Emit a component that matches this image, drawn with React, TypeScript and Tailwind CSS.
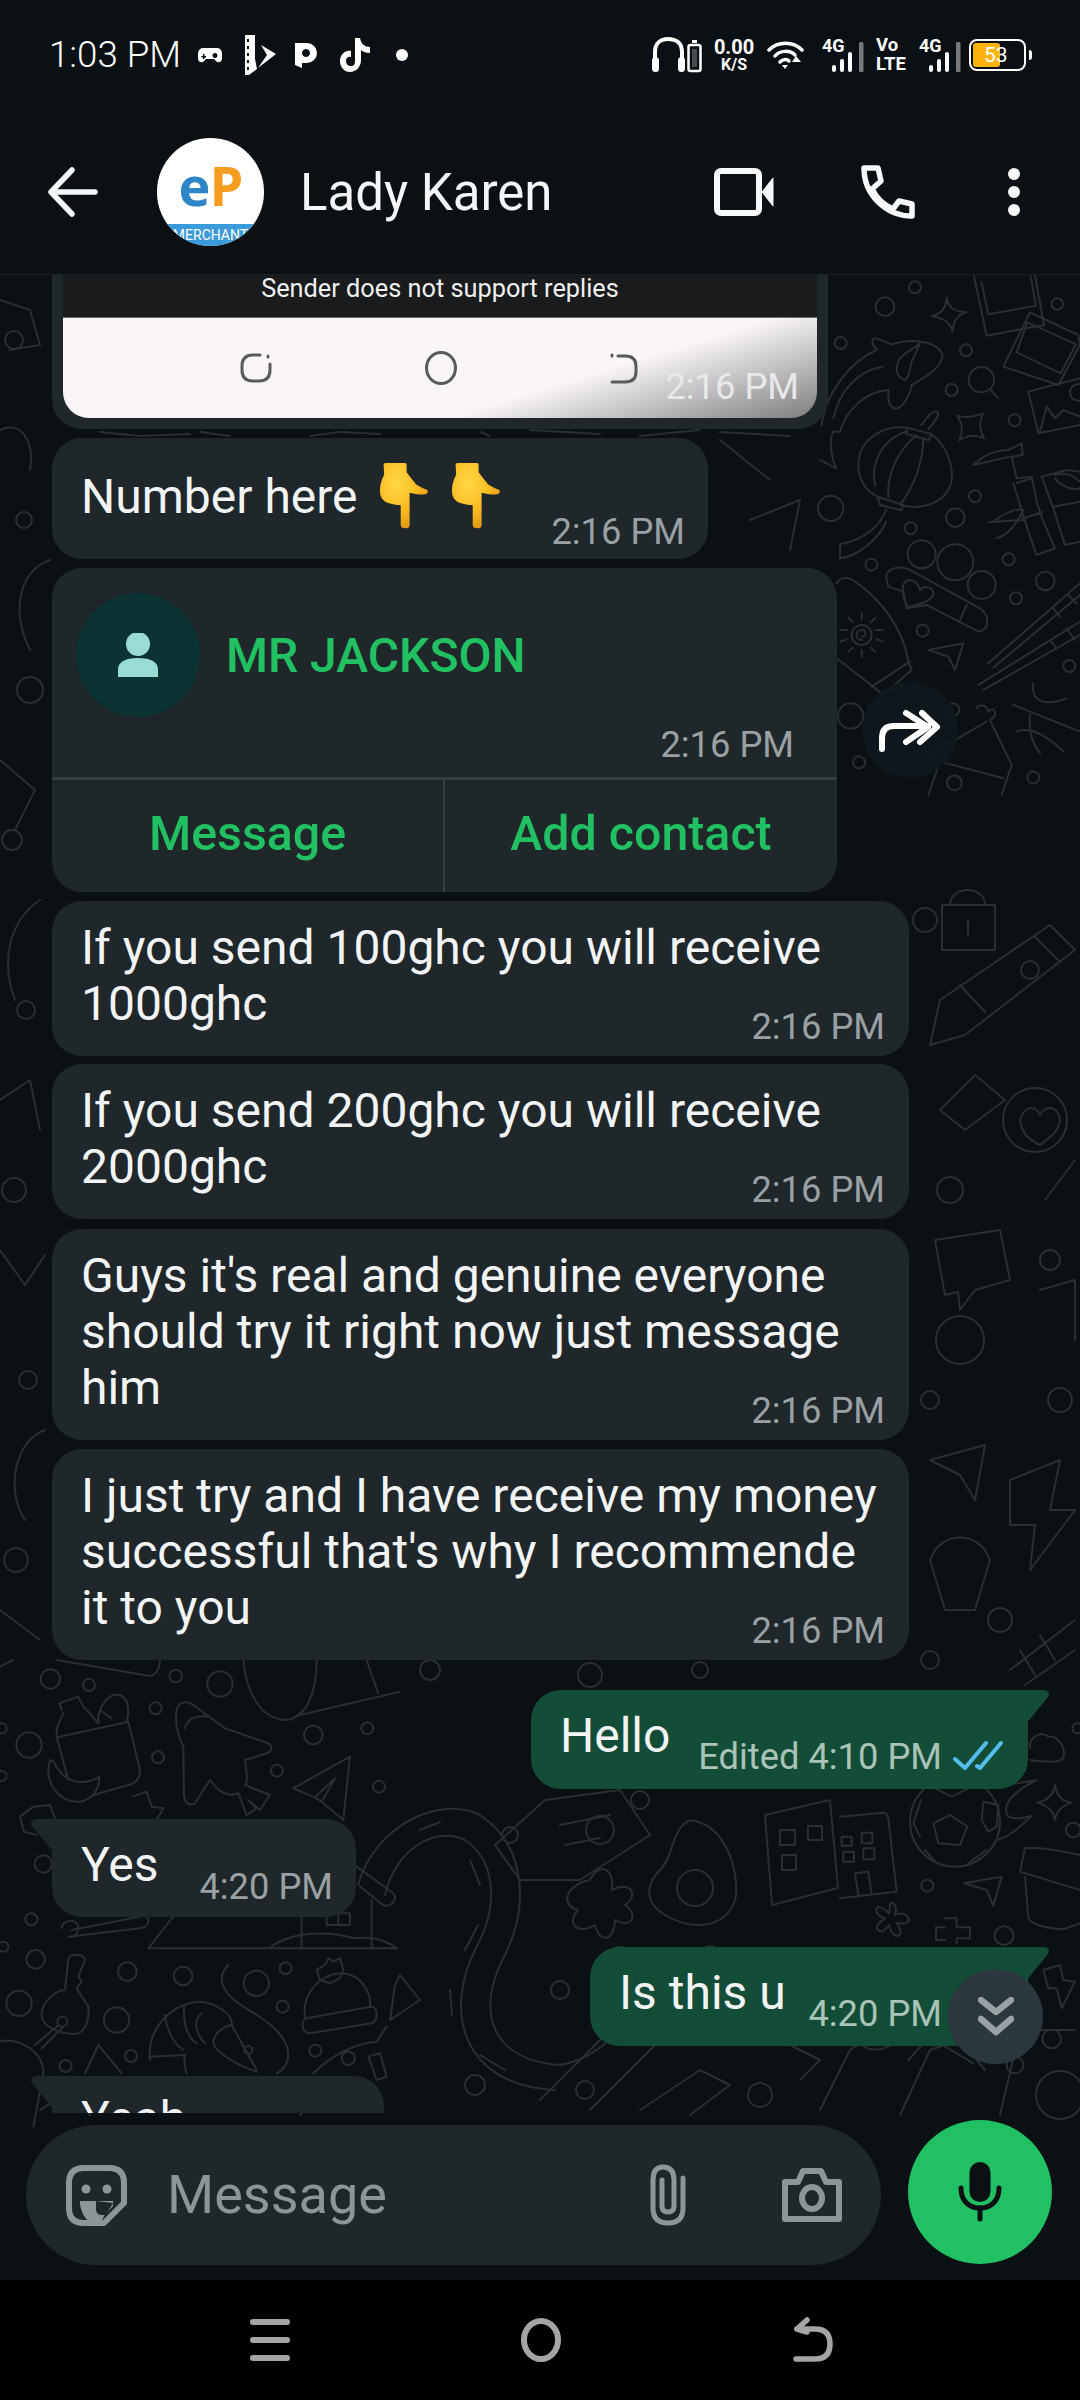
import React from "react";

const circlesRight: [number, number, number][] = [
  [285, 37, 18], [195, 95, 28], [62, 204, 18], [438, 226, 18], [395, 345, 18], [712, 87, 17],
  [584, 436, 18], [465, 664, 18], [406, 728, 28], [272, 760, 18], [32, 700, 38], [154, 869, 18],
  [566, 853, 18], [676, 918, 28], [588, 970, 18], [308, 1067, 18], [748, 1173, 18], [92, 1323, 38],
  [117, 1462, 18], [400, 1304, 18], [640, 1508, 18], [403, 1524, 22], [305, 838, 42], [406, 862, 54],
  [485, 930, 42], [775, 352, 25], [484, 314, 38], [125, 1080, 30],
];

const pathsRight = [
  "M380 68 C385 100 405 110 440 112 C410 120 400 140 398 170 C390 140 370 130 336 124 C365 115 378 100 380 68Z",
  "M412 422 C440 430 460 428 488 416 C478 445 478 465 492 490 C465 478 445 480 418 496 C430 470 428 445 412 422Z",
  "M462 4 L500 182 L672 150 L645 2 M484 22 L505 118 L648 92 L632 4",
  "M630 112 L775 180 L780 210 L715 330 L550 275 Z M622 142 L768 208 L722 295 L590 232Z",
  "M625 350 L780 310 M625 350 L655 475 L780 450 M660 470 L680 395 L705 430 L730 405 L780 425",
  "M510 342 L535 370",
  "M4 450 C20 350 90 260 170 225 C150 200 155 188 170 190 L215 208 C270 190 350 195 368 240 C365 280 310 310 275 330 C270 370 240 405 222 400 C205 395 205 370 205 345 C140 350 80 400 60 470 L40 470 C25 500 35 550 48 580 L0 555",
  "M300 205 C280 225 262 225 240 250 C225 275 225 305 255 315 C275 300 265 275 280 250 Z M188 275 C120 285 60 340 40 430",
  "M262 458 C180 450 115 500 115 570 C115 625 150 660 190 672 M335 478 C390 520 410 600 385 645 C360 690 290 705 245 690",
  "M262 468 C190 490 150 560 165 630 M290 480 C240 520 200 590 205 665 M310 490 C310 560 280 640 240 690",
  "M262 458 L335 478 L326 496 L258 476Z M172 665 L250 690 L244 706 L180 690Z M305 450 C320 430 335 405 352 410 C362 420 345 440 325 462",
  "M198 705 C185 740 150 790 60 808 L60 850 C110 845 180 790 198 740",
  "M460 570 C490 540 530 525 565 525 L605 505 L608 540 L575 545 L590 610 L635 605 L650 680 L668 735 L705 820 L650 840 L625 770 L608 715 L580 625 M590 625 L635 610 M608 730 L668 712 M520 740 C560 710 590 700 610 705 C590 750 560 780 530 790 M505 742 L610 735 M460 570 L570 545",
  "M665 605 L740 585 L780 590 M665 605 L700 700 L735 810 L780 800 M700 695 L780 680 M705 600 C730 590 760 600 780 620 M705 610 C730 640 760 645 780 640",
  "M50 925 C60 905 90 905 105 920 C180 970 250 1060 265 1160 L275 1185 L190 1260 L160 1235 L50 1150 M155 1235 L270 1160",
  "M125 1095 C105 1095 105 1065 125 1065 C140 1065 140 1085 125 1085 M125 1015 V1035 M125 1125 V1145 M60 1065 H80 M168 1065 H188 M85 1028 L98 1042 M165 1030 L152 1042 M85 1130 L98 1118 M165 1130 L152 1118 M62 1100 L80 1093 M188 1100 L170 1093",
  "M200 915 C190 880 240 870 270 885 L480 1000 C510 1020 510 1065 475 1070 L320 990 L260 1000 L250 950 L205 935 Z M262 995 C240 950 245 915 270 915 C285 915 295 930 300 945 C310 930 340 935 340 955 C340 975 300 990 262 995Z M420 1035 L440 990",
  "M325 1125 L430 1105 L405 1185 L385 1145 Z",
  "M505 1165 L780 925 M520 1178 L780 960 M475 1230 L780 1040 M490 1245 L780 1080 M700 1000 L720 1025 M745 960 L770 985 M690 1095 L710 1120 M740 1060 L765 1095",
  "M640 1225 C630 1290 690 1290 740 1270 M580 1290 L780 1370 M630 1320 C625 1370 640 1410 660 1435 M590 1370 C640 1350 700 1400 730 1430",
  "M470 1300 C470 1290 500 1285 505 1310 C520 1290 540 1320 510 1335 L575 1470 L545 1560 M500 1340 L345 1430 C335 1450 345 1460 360 1460 L550 1510 M360 1460 L325 1560",
];

const circlesLeft: [number, number, number][] = [
  [151, 57, 29], [267, 75, 18], [527, 48, 19], [660, 72, 38], [467, 145, 18], [87, 255, 38],
  [474, 292, 18], [831, 332, 18], [940, 225, 28], [1102, 205, 18], [1137, 380, 18], [5, 205, 15],
  [5, 348, 15], [94, 778, 18], [107, 898, 28], [382, 935, 28], [549, 948, 28], [769, 970, 38],
  [857, 925, 18], [848, 1040, 18], [57, 1030, 38], [350, 1080, 38], [393, 1188, 18], [197, 1218, 18],
  [946, 1172, 18], [130, 612, 26], [1045, 1195, 20], [10, 860, 15], [187, 1085, 15], [745, 1170, 12],
];

const pathsLeft = [
  "M185 150 L178 130 L235 110 L250 140 L265 155 L295 190 M190 160 C175 190 168 205 170 230 L205 360 M172 232 L385 185 M385 185 L420 330 C420 350 410 365 395 372 L280 405",
  "M295 190 C290 140 330 95 360 105 C385 115 390 150 380 185 M300 150 L335 175",
  "M150 300 C130 370 180 430 240 425 C280 420 300 380 298 350 C270 370 200 385 160 305 Z",
  "M530 150 C535 125 560 120 580 135 L675 205 L805 250 C820 260 815 275 800 280 L735 300 C740 340 745 365 735 375 L810 405 L780 450 L745 420 L770 445 L740 465 L715 400 L690 405 C650 395 640 370 630 360 L585 430 C565 440 555 425 552 410 L550 260 C530 220 525 180 530 150 Z M555 205 C560 180 585 165 620 170",
  "M880 385 L1050 290 L1030 480 L965 425 L945 412 Z M945 412 L1005 355 L965 425",
  "M398 410 L440 395 L455 440 L490 445 L470 480 M60 470 L100 440 L150 435 L165 475 M60 470 L72 515 L110 525",
  "M445 865 L535 750 M445 865 H1190 M905 740 V865 M1115 720 V860 M980 760 H1050 V795 H980 Z M1015 760 V795 M815 860 C880 810 1000 815 1060 835 C1110 830 1150 835 1190 865",
  "M1070 620 L1180 700 C1195 720 1170 745 1150 735 L1080 680",
  "M215 810 L420 770 M185 805 C185 785 215 775 230 790 C245 810 225 835 205 830 L420 805 C450 800 455 770 425 765",
  "M205 895 C215 880 250 880 255 900 L235 950 L245 965 L230 985 L265 1040 C270 1080 255 1120 225 1122 C180 1122 120 1100 125 1060 C130 1020 170 990 195 990 Z M175 1095 L105 1155 M190 1100 L125 1165",
  "M450 1200 C440 1110 510 1030 600 1025 C660 1030 700 1070 695 1095 L770 1230 M640 1150 C640 1120 670 1100 695 1095 M640 1150 C650 1180 720 1220 770 1235 M495 1065 C500 1110 520 1150 550 1170 M552 1040 C550 1090 560 1130 590 1150 M605 1060 C580 1080 585 1120 615 1150 M450 1190 L555 1185 C550 1200 555 1220 560 1240",
  "M685 915 C640 960 680 1010 730 1040 C790 1075 860 1120 865 1180 C865 1210 850 1230 830 1240",
  "M915 1075 C905 1000 960 940 1030 940 C1085 945 1115 1000 1110 1040 M920 1075 L1115 1040 C1135 1040 1135 1085 1115 1090 L930 1120 C905 1120 900 1080 920 1075 M950 930 L975 915 L985 895 L1000 905 L1020 895 L1030 930 L1020 955 L990 970 L960 960Z",
  "M255 1240 L295 1155 L365 1240 M0 1145 C50 1130 130 1170 130 1240 L100 1400 M940 1240 C990 1190 1060 1150 1130 1145 L1160 1100 M1105 1190 L1140 1180 L1160 1250 L1130 1260 Z",
  "M0 20 L40 0 M170 0 L450 48 C470 45 480 20 480 0 M730 0 C740 110 790 180 860 180 C920 170 950 100 950 0 M900 165 L1200 95 M1100 0 L1135 100",
];

const circlesBall: [number, number, number][] = [
  [262, 617, 18], [492, 767, 28], [635, 1077, 28], [700, 450, 22], [712, 145, 15], [525, 1155, 25], [345, 425, 135],
];

const pathsBall = [
  "M330 405 L382 440 L360 495 L295 490 L280 430 Z M285 325 L335 350 L385 325 M243 360 L220 430 L240 470 M430 365 L475 375 L470 440 L445 455 L425 420 Z M255 510 L285 545 M385 550 L440 510",
  "M470 320 L590 300 C530 330 480 370 505 410 C525 420 550 415 575 408 C540 440 510 470 470 480",
  "M645 315 C650 350 670 365 695 368 C670 375 650 390 645 420 C640 390 620 375 592 368 C620 362 640 345 645 315Z",
  "M0 410 L130 398 C140 398 142 405 145 415 L170 635 L0 655 M5 470 H35 V497 H5 Z M65 458 L97 458 L97 490 L65 490Z M10 515 H42 V545 H10Z M70 505 H103 V538 H70Z M45 580 L85 575 L95 640 M45 580 L55 645",
  "M555 505 C620 500 690 520 720 525 M540 575 L555 505 M540 575 L720 630 M555 590 L565 715 C580 735 620 745 670 748 L720 730",
  "M372 610 L485 590 L460 678 L440 630Z",
  "M150 670 C170 665 170 695 165 705 C190 695 210 705 205 725 C195 735 180 730 170 728 C180 745 190 765 170 768 C150 760 150 745 148 735 C135 750 125 765 110 745 C110 730 125 725 135 715 C115 710 100 690 115 680 C135 685 140 695 148 700Z",
  "M315 715 H350 V742 H390 V775 H350 V790 M315 742 H288 V780 H315",
  "M570 205 C565 175 600 150 625 170 C650 165 680 200 670 235 C660 250 600 245 570 240",
  "M610 870 L660 855 L670 900 L705 905 L665 985 L650 925 L625 925Z",
  "M65 1090 C70 1110 120 1120 160 1090 M205 1140 L250 1090 M300 1090 L400 1150",
];

// page coordinates, everything else on the wallpaper
const circlesPage: [number, number, number][] = [
  [14, 340, 9], [24, 520, 8], [30, 690, 13], [12, 840, 10], [26, 1010, 9], [14, 1190, 12], [28, 1380, 9], [16, 1560, 12],
  [600, 1830, 14], [640, 1800, 9], [620, 1960, 13], [560, 1990, 9], [710, 1955, 9], [510, 1835, 8],
  [925, 920, 12], [1030, 970, 9], [950, 1190, 13], [1050, 1260, 10], [930, 1400, 9], [1060, 1400, 12],
  [1000, 1620, 12], [930, 1660, 9], [430, 1670, 10], [700, 1670, 8], [585, 2090, 9], [475, 2085, 10], [760, 2095, 12],
  [695, 1888, 18], [1035, 1120, 32], [960, 1340, 24], [590, 1675, 12], [1060, 2095, 24],
];

const pathsPage = [
  "M358 1885 C375 1825 440 1795 480 1815 C525 1845 530 1905 505 1955 C475 2010 490 2060 560 2065 C590 2060 610 2040 620 2030",
  "M385 1895 C395 1850 435 1825 465 1840 C495 1860 500 1905 475 1950 C445 2010 460 2085 555 2090",
  "M420 1830 L440 1822 M470 1860 L480 1885 M478 1925 L465 1950 M450 1990 L452 2015 M480 2055 L505 2070",
  "M690 1820 C730 1825 740 1880 735 1900 C725 1930 690 1930 665 1915 C640 1900 650 1880 660 1870 C675 1855 670 1830 690 1820Z",
  "M590 1880 C600 1860 615 1870 612 1890 C630 1880 640 1895 625 1905 C640 1915 630 1930 615 1920 C615 1940 600 1945 595 1925 C580 1935 565 1925 578 1910 C560 1905 565 1885 590 1880Z",
  "M765 1815 L830 1800 L838 1888 L772 1905Z M780 1830 H795 V1845 H780Z M808 1826 H822 V1840 H808Z M782 1855 H796 V1870 H782Z",
  "M520 1880 L495 1845 L545 1800 L620 1790 L650 1835 L580 1880Z M560 1825 L610 1815 M565 1845 L600 1838",
  "M400 1975 L420 2000 L390 2020 L395 1985Z M540 2100 L620 2020 L660 2040 L590 2110",
  "M640 2110 L700 2070 L730 2085 L690 2115 M820 2110 L850 2050 L880 2030 M780 2040 L820 2060 L800 2080",
  "M900 2115 L930 2050 L960 2040 L985 2070 M1000 2115 L1020 2030 L1075 2030",
  "M940 1000 L1050 925 L1075 950 L965 1035 L930 1045Z M960 985 L985 1012 M1035 937 L1060 962",
  "M950 905 C950 885 985 885 985 905 M942 905 H995 V950 H942Z M968 920 V935",
  "M1020 1120 C1025 1105 1035 1105 1040 1115 C1045 1105 1058 1105 1060 1120 C1058 1135 1045 1140 1040 1145 C1030 1140 1022 1135 1020 1120Z",
  "M940 1110 L975 1075 L1005 1100 L965 1130Z M1045 1200 L1075 1160",
  "M1040 1290 L1075 1280 L1075 1340 M935 1240 L1000 1230 L1010 1280 L975 1290 L960 1310 L958 1292 L945 1295Z",
  "M1010 1480 L1060 1460 L1050 1510 L1075 1510 L1030 1570 L1035 1525 L1010 1525Z M930 1460 L985 1445 L975 1500 L960 1475Z",
  "M1010 1670 L1075 1620 M1025 1685 L1075 1650 M1040 1635 L1055 1660 M1020 1650 L1035 1675",
  "M930 1560 C940 1530 980 1530 990 1560 L975 1610 H945Z",
  "M0 300 L30 310 L40 345 L10 350 M0 430 C20 420 35 440 30 470 M50 560 C20 570 10 610 30 650 M0 760 L35 790 L15 830 M40 900 C10 920 0 960 15 1000 M0 1100 L30 1080 L40 1130 M0 1250 L25 1285 L45 1255 M45 1430 C15 1440 5 1490 25 1520 M0 1610 L40 1640",
  "M100 432 L140 436 L190 434 M200 432 L230 436 M310 436 L340 432 L380 434 M480 432 L490 436 M530 430 L600 434 M640 436 L700 430 M720 432 L790 436",
  "M720 440 L770 480 M750 520 L800 500 L790 550",
  "M40 2110 C60 2095 80 2095 90 2115 M180 2110 L200 2090 M300 2115 L330 2085 L360 2110",
];

function Wallpaper() {
  const stroke = "#2a2f32";
  return (
    <svg
      className="absolute inset-0 w-full h-full"
      viewBox="0 275 1080 2005"
      fill="none"
      stroke={stroke}
      strokeLinecap="round"
      strokeLinejoin="round"
    >
      <g transform="translate(820 275) scale(0.3333)" strokeWidth={6}>
        {circlesRight.map(([cx, cy, r], i) => (
          <circle key={i} cx={cx} cy={cy} r={r} />
        ))}
        {pathsRight.map((d, i) => (
          <path key={i} d={d} />
        ))}
      </g>
      <g transform="translate(0 1660) scale(0.3333)" strokeWidth={6}>
        {circlesLeft.map(([cx, cy, r], i) => (
          <circle key={i} cx={cx} cy={cy} r={r} />
        ))}
        {pathsLeft.map((d, i) => (
          <path key={i} d={d} />
        ))}
      </g>
      <g transform="translate(840 1680) scale(0.3333)" strokeWidth={6}>
        {circlesBall.map(([cx, cy, r], i) => (
          <circle key={i} cx={cx} cy={cy} r={r} />
        ))}
        {pathsBall.map((d, i) => (
          <path key={i} d={d} />
        ))}
      </g>
      <g strokeWidth={2}>
        {circlesPage.map(([cx, cy, r], i) => (
          <circle key={i} cx={cx} cy={cy} r={r} />
        ))}
        {pathsPage.map((d, i) => (
          <path key={i} d={d} />
        ))}
      </g>
    </svg>
  );
}

function Hand() {
  return (
    <svg width="50" height="66" viewBox="0 0 150 200">
      <defs>
        <radialGradient id="handFill" cx="0.35" cy="0.3" r="0.7">
          <stop offset="0" stopColor="#ffd747" />
          <stop offset="0.6" stopColor="#fbbd23" />
          <stop offset="1" stopColor="#e59a12" />
        </radialGradient>
      </defs>
      <path
        fill="url(#handFill)"
        d="M13 6 Q13 0 20 0 H78 Q84 0 83 8 L83 28 Q95 45 112 65 Q130 76 146 82 Q150 90 142 94 Q125 98 100 92 L92 90 L92 190 Q90 198 78 198 Q66 198 65 188 L65 128 Q50 128 30 122 Q2 115 2 85 Q2 60 15 35 Z"
      />
    </svg>
  );
}

function Time({ children, className }: { children: React.ReactNode; className?: string }) {
  return <span className={"text-[36.3px] leading-[40px] text-[#9ba0a3] whitespace-nowrap " + (className ?? "")}>{children}</span>;
}

function TextBubble({ lines, w }: { lines: string[]; w: string }) {
  return (
    <div className={"flex flex-col bg-[#1f272a] rounded-[30px] pl-[29px] pr-[24px] pt-[19px] pb-[9px] " + w}>
      <p className="text-[48px] leading-[56px] text-[#f2f4f5] whitespace-nowrap">
        {lines.map((l) => (
          <span key={l} className="block">
            {l}
          </span>
        ))}
      </p>
      <Time className="self-end -mt-[25px]">2:16 PM</Time>
    </div>
  );
}

function TailIn() {
  return (
    <svg className="absolute -left-[22px] top-0" width="24" height="34" viewBox="0 0 24 34">
      <path fill="#1f272a" d="M24 0 H6 Q-1 1 2 7 L24 34 Z" />
    </svg>
  );
}

function TailOut() {
  return (
    <svg className="absolute -right-[22px] top-0" width="24" height="34" viewBox="0 0 24 34">
      <path fill="#144d37" d="M0 0 H18 Q25 1 22 7 L0 34 Z" />
    </svg>
  );
}

function TopBubble() {
  return (
    <div className="w-[776px] h-[154px] bg-[#1f272a] rounded-b-[30px] px-[11px]">
      <div className="h-[43px] bg-[#191b1c] flex items-start justify-center text-[25.3px] leading-[28px] text-[#f0f0f0] border-b border-[#6b6b6b]">
        Sender does not support replies
      </div>
      <div className="relative h-[100px] rounded-b-[26px] bg-[linear-gradient(163deg,#f8f4f8_66%,#7e7e7e_100%)] flex items-center pl-[177px] gap-[153px]">
        <svg width="32" height="32" viewBox="0 0 32 32" fill="none" stroke="#5a5a5c" strokeWidth="3" strokeLinecap="round">
          <path d="M20 3 H13 Q2 3 2 14 V18 Q2 29 13 29 H19 Q30 29 30 18 V12" />
          <path d="M28 4 V5" />
        </svg>
        <svg width="32" height="34" viewBox="0 0 32 34" fill="none" stroke="#5a5a5c" strokeWidth="3">
          <ellipse cx="16" cy="17" rx="14.5" ry="15.5" />
        </svg>
        <svg width="28" height="32" viewBox="0 0 28 32" fill="none" stroke="#5a5a5c" strokeWidth="3" strokeLinecap="round">
          <path d="M8 4 H15 Q26 4 26 14 V20 Q26 30 15 30 H2" />
          <path d="M2 3 V4" />
        </svg>
        <Time className="absolute right-[18px] bottom-[11px] !text-[#e9e9e9]">2:16 PM</Time>
      </div>
    </div>
  );
}

function ContactCard() {
  return (
    <div className="flex items-start">
      <div className="w-[785px] h-[324px] bg-[#1f272a] rounded-[30px] flex flex-col overflow-hidden">
        <div className="flex items-center pl-[24px] pt-[25px] gap-[26px]">
          <div className="w-[124px] h-[124px] rounded-full bg-[#0b3331] flex items-center justify-center">
            <svg width="44" height="44" viewBox="0 0 44 44" fill="#9bdcd2">
              <ellipse cx="22" cy="11" rx="12" ry="12" />
              <path d="M2 44 V36 C2 28 12 25 22 25 C32 25 42 28 42 36 V44 Z" />
            </svg>
          </div>
          <span className="text-[48px] font-medium text-[#21c063] leading-none mt-[2px]">MR JACKSON</span>
        </div>
        <Time className="self-end mr-[43px] mt-[8px]">2:16 PM</Time>
        <div className="mt-[12px] flex flex-1 border-t-[3px] border-[#363e41] text-[48.3px] font-medium text-[#21c063]">
          <div className="w-[393px] flex items-center justify-center border-r-2 border-[#363e41] pb-[4px]">Message</div>
          <div className="flex-1 flex items-center justify-center pb-[4px]">Add contact</div>
        </div>
      </div>
      <div className="ml-[25px] mt-[114px] w-[96px] h-[96px] rounded-full bg-[#0f181d]/90 flex items-center justify-center">
        <svg width="96" height="96" viewBox="0 0 96 96" fill="none" stroke="#ffffff" strokeWidth="6" strokeLinecap="round" strokeLinejoin="round">
          <path d="M20 67 V56 Q20 44 32 44 H66" />
          <path d="M44 31 L66 45 L44 60" />
          <path d="M60 31 L75 45 L58 60" />
        </svg>
      </div>
    </div>
  );
}

function NumberBubble() {
  return (
    <div className="w-[656px] h-[121px] bg-[#1f272a] rounded-[30px] pl-[29px] pr-[23px] relative">
      <div className="flex items-start pt-[25px]">
        <span className="text-[48px] leading-[56px] text-[#f2f4f5] mt-[6px]">Number here</span>
        <div className="flex gap-[22px] ml-[21px]">
          <Hand />
          <Hand />
        </div>
      </div>
      <Time className="absolute right-[23px] bottom-[7px]">2:16 PM</Time>
    </div>
  );
}

function Checks() {
  return (
    <svg width="50" height="30" viewBox="0 0 50 30" fill="none" stroke="#53bdeb" strokeWidth="4" strokeLinecap="round" strokeLinejoin="round">
      <path d="M2 19 L12 28 L33 3" />
      <path d="M24 26 L27 28 L48 3" />
    </svg>
  );
}

function Outgoing({ text, meta, check, w }: { text: string; meta: string; check?: boolean; w: string }) {
  return (
    <div className={"self-end relative mr-[52px] h-[99px] bg-[#144d37] rounded-[30px] rounded-tr-none pl-[29px] flex items-end " + w}>
      <TailOut />
      <span className="text-[48px] leading-[56px] text-[#f2f4f5] mb-[25px]">{text}</span>
      <span className={"ml-auto text-[36.3px] leading-[40px] text-[#a9c3b7] whitespace-nowrap mb-[12px] " + (check ? "mr-[11px]" : "mr-[86px]")}>
        {meta}
      </span>
      {check && (
        <div className="mr-[25px] mb-[19px]">
          <Checks />
        </div>
      )}
    </div>
  );
}

function Messages() {
  return (
    <div className="relative h-[1838px] overflow-hidden flex flex-col pl-[52px] *:shrink-0">
      <TopBubble />
      <div className="mt-[9px]">
        <NumberBubble />
      </div>
      <div className="mt-[9px]">
        <ContactCard />
      </div>
      <div className="mt-[9px]">
        <TextBubble w="w-[857px]" lines={["If you send 100ghc you will receive", "1000ghc"]} />
      </div>
      <div className="mt-[8px]">
        <TextBubble w="w-[857px]" lines={["If you send 200ghc you will receive", "2000ghc"]} />
      </div>
      <div className="mt-[10px]">
        <TextBubble w="w-[857px]" lines={["Guys it's real and genuine everyone", "should try it right now just message", "him"]} />
      </div>
      <div className="mt-[9px]">
        <TextBubble w="w-[857px]" lines={["I just try and I have receive my money", "successful that's why I recommende", "it to you"]} />
      </div>
      <div className="mt-[30px] flex flex-col">
        <Outgoing w="w-[497px]" text="Hello" meta="Edited 4:10 PM" check />
      </div>
      <div className="mt-[30px] relative w-[304px] h-[98px] bg-[#1f272a] rounded-[30px] rounded-tl-none pl-[29px] pr-[23px] flex items-end justify-between">
        <TailIn />
        <span className="text-[48px] leading-[56px] text-[#f2f4f5] mb-[24px]">Yes</span>
        <Time className="mb-[10px]">4:20 PM</Time>
      </div>
      <div className="mt-[30px] flex flex-col relative">
        <Outgoing w="w-[438px]" text="Is this u" meta="4:20 PM" />
      </div>
      <div className="mt-[30px] relative w-[332px] h-[98px] bg-[#1f272a] rounded-[30px] rounded-tl-none pl-[29px]">
        <TailIn />
        <span className="block pt-[15px] text-[48px] leading-[56px] text-[#f2f4f5]">Yeah</span>
      </div>
      <div className="absolute left-[948px] top-[1694px] w-[95px] h-[95px] rounded-full bg-[#2c363d] flex items-center justify-center">
        <svg width="36" height="40" viewBox="0 0 36 40" fill="none" stroke="#9aa0a4" strokeWidth="6.5" strokeLinecap="round" strokeLinejoin="round">
          <path d="M3 3 L18 15 L33 3" />
          <path d="M3 22 L18 35 L33 22" />
        </svg>
      </div>
    </div>
  );
}

function InputBar() {
  return (
    <div className="relative flex items-start pl-[26px] pt-[7px] h-[167px]">
      <div className="w-[855px] h-[140px] mt-[5px] rounded-[70px] bg-[#1f272a] flex items-center pl-[40px]">
        <svg width="61" height="61" viewBox="0 0 61 61" fill="none" stroke="#8d9598" strokeWidth="6" strokeLinejoin="round">
          <path d="M18 3 H43 Q58 3 58 18 V38 L38 58 H18 Q3 58 3 43 V18 Q3 3 18 3 Z" />
          <path d="M14 36 H47 V41 L38 51 Q36 58 30 58 Q18 58 14 40 Z" fill="#8d9598" stroke="none" />
          <path d="M30 36 V44 Q30 50 36 50 H40 L47 38 Z" fill="#1f272a" stroke="none" />
          <circle cx="20" cy="24" r="4.5" fill="#8d9598" stroke="none" />
          <circle cx="41" cy="24" r="4.5" fill="#8d9598" stroke="none" />
        </svg>
        <span className="ml-[40px] text-[54px] text-[#8d9598] leading-none">Message</span>
        <svg className="ml-auto" width="38" height="62" viewBox="0 0 38 62" fill="none" stroke="#8d9598" strokeWidth="5" strokeLinecap="round">
          <path d="M34 14 V44 Q34 59 19 59 Q4 59 4 44 V16 Q4 3 14 3 Q25 3 25 16 V42 Q25 48 19 48 Q13 48 13 42 V16" />
        </svg>
        <svg className="ml-[95px] mr-[39px]" width="60" height="54" viewBox="0 0 60 54" fill="none" stroke="#8d9598" strokeWidth="6" strokeLinejoin="round">
          <path d="M3 14 H16 L21 3 H39 L44 14 H57 V51 H3 Z" />
          <ellipse cx="30" cy="30" rx="10" ry="11" />
        </svg>
      </div>
      <div className="ml-[27px] w-[144px] h-[144px] rounded-full bg-[#21c063] flex items-center justify-center">
        <svg width="44" height="60" viewBox="0 0 44 60" fill="none" stroke="#0b1014" strokeLinecap="round">
          <rect x="11.5" y="0" width="21" height="40" rx="10.5" fill="#0b1014" stroke="none" />
          <path d="M3 26 C3 38 10 46 22 46 C34 46 41 38 41 26" strokeWidth="5" />
          <path d="M22 46 V57" strokeWidth="5" />
        </svg>
      </div>
    </div>
  );
}

function NavBar() {
  return (
    <div className="h-[120px] bg-black flex items-center pl-[250px]">
      <svg width="40" height="42" viewBox="0 0 40 42" stroke="#a5a5a5" strokeWidth="6" strokeLinecap="round">
        <path d="M3 3 H37 M3 21 H37 M3 39 H37" />
      </svg>
      <svg className="ml-[230px]" width="42" height="44" viewBox="0 0 42 44" fill="none" stroke="#a5a5a5" strokeWidth="6">
        <ellipse cx="21" cy="22" rx="17" ry="19" />
      </svg>
      <svg className="ml-[231px]" width="40" height="46" viewBox="0 0 40 46" fill="none" stroke="#a5a5a5" strokeWidth="5.5" strokeLinecap="round" strokeLinejoin="round">
        <path d="M14 3 L4 12 L14 15" />
        <path d="M4 12 H22 Q37 12 37 27 Q37 42 22 42 H3" />
      </svg>
    </div>
  );
}

function StatusBar() {
  return (
    <div className="h-[110px] flex items-center pl-[49px] text-white relative">
      <span className="text-[36.7px] leading-none font-light">1:03 PM</span>
      <svg className="ml-[17px]" width="24" height="15" viewBox="0 0 24 15" fill="#fff">
        <path fillRule="evenodd" d="M5 0 H19 Q23 0 24 5 V11 Q23 15 19 14 L16 11 H8 L5 14 Q1 15 0 11 V5 Q1 0 5 0 Z M5 6 V8 H3.5 V9.5 H5 V11 H6.5 V9.5 H8 V8 H6.5 V6 Z M17 5 A2.5 2.5 0 1 0 17.01 5 Z" />
      </svg>
      <svg className="ml-[22px]" width="32" height="44" viewBox="0 0 32 44" fill="#fff">
        <path fillRule="evenodd" d="M1 2 H11 V26 L13 36 L5 42 L1 42 Z M3 6 V9 H5 V6 Z M3 13 V16 H5 V13 Z M3 20 V23 H5 V20 Z M3 27 V30 H5 V27 Z M3 34 V37 H5 V34 Z" />
        <path d="M17 12 L32 21 L14 35 L23 22 Z" />
      </svg>
      <svg className="ml-[19px]" width="22" height="28" viewBox="0 0 22 28" fill="#fff">
        <path fillRule="evenodd" d="M0 2 H12 A10 10 0 0 1 12 22 H7 V27 L0 24 Z M11 8 A4 4 0 1 0 11.01 8 Z" />
      </svg>
      <svg className="ml-[23px]" width="30" height="34" viewBox="0 0 30 34" fill="#fff">
        <path d="M15 0 H20 C21 6 25 9 30 9 V15 C26 15 23 14 21 12 V22 C21 29 16 34 10 34 C4 34 0 29 0 23 C0 17 5 12 11 13 V19 C8 18 6 20 6 23 C6 26 8 28 11 28 C14 28 15 26 15 23 Z" />
      </svg>
      <span className="ml-[26px] w-[12px] h-[12px] rounded-full bg-white" />

      <div className="ml-auto mr-[48px] flex items-center h-[36px]">
        <svg width="50" height="36" viewBox="0 0 50 36" fill="none">
          <path d="M3 28 V15 C3 6 9 2 16 2 C24 2 30 6 30 15 V28" stroke="#fff" strokeWidth="4" />
          <rect x="0" y="20" width="7" height="15" rx="3.5" fill="#fff" />
          <rect x="26" y="20" width="7" height="15" rx="3.5" fill="#fff" />
          <rect x="36.5" y="8" width="12" height="26" rx="2" stroke="#fff" strokeWidth="2.5" />
          <rect x="40" y="12" width="5" height="18" fill="#fff" fillOpacity="0.25" />
          <rect x="40" y="3" width="5" height="3" fill="#fff" />
        </svg>
        <div className="ml-[10px] w-[44px] flex flex-col items-center font-bold text-white">
          <span className="text-[20px] leading-[20px]">0.00</span>
          <span className="text-[16px] leading-[16px]">K/S</span>
        </div>
        <svg className="ml-[11px]" width="37" height="30" viewBox="0 0 37 30" fill="none" stroke="#fff" strokeWidth="3.5" strokeLinecap="round">
          <path d="M2 10 C11 1 26 1 35 10" />
          <path d="M8 16 C13 10 23 10 28 15" />
          <path d="M13 22 C16 19 20 19 22 21" />
          <path d="M18 29 L15 25 H21 Z" fill="#fff" strokeWidth="0" />
          <path d="M29 16 L25 22 H34 Z" fill="#fff" stroke="none" />
        </svg>
        <Signal className="ml-[18px]" />
        <div className="ml-[12px] w-[32px] flex flex-col items-start font-bold text-white">
          <span className="text-[18.5px] leading-[19px]">Vo</span>
          <span className="text-[18.5px] leading-[19px]">LTE</span>
        </div>
        <Signal className="ml-[11px]" />
        <div className="ml-[8px] relative w-[57px] h-[32px] rounded-[8px] border-2 border-white flex items-center overflow-hidden">
          <div className="ml-[2px] w-[27px] h-[24px] rounded-[3px] bg-[#ffb30f]" />
          <span className="absolute left-[13px] top-0 text-[21px] leading-[28px] text-white">53</span>
        </div>
        <span className="ml-[3px] w-[3px] h-[10px] bg-white rounded-r-sm" />
      </div>
    </div>
  );
}

function Signal({ className }: { className?: string }) {
  return (
    <div className={"relative w-[42px] h-[34px] " + (className ?? "")}>
      <span className="absolute left-0 -top-[1px] text-[18px] leading-[18px] font-bold text-white">4G</span>
      <svg className="absolute left-0 top-0" width="42" height="34" viewBox="0 0 42 34">
        <rect x="10" y="27" width="4" height="7" rx="2" fill="#fff" />
        <rect x="18" y="21" width="4" height="13" rx="2" fill="#fff" />
        <rect x="26" y="14" width="4" height="20" rx="2" fill="#fff" />
        <rect x="37" y="4" width="4.5" height="30" rx="1.5" fill="#77797b" />
      </svg>
    </div>
  );
}

function Header() {
  return (
    <div className="h-[165px] flex items-center border-b border-[#1a2125] text-white">
      <svg className="ml-[48px]" width="50" height="50" viewBox="0 0 50 50" fill="none" stroke="#f4f6f8" strokeWidth="5.5" strokeLinecap="round" strokeLinejoin="round">
        <path d="M47 25 H4 M24 3 L3 25 L24 47" />
      </svg>
      <div className="ml-[59px] relative w-[107px] h-[108px] rounded-full bg-white overflow-hidden flex flex-col items-center">
        <div className="flex-1 flex items-center leading-none font-bold text-[54px] tracking-[-1px] pt-[8px]" style={{ fontFamily: "Open Sans, sans-serif" }}>
          <span className="text-[#2e86c8]">e</span>
          <span className="text-[#f39c1f]">P</span>
        </div>
        <div className="w-full h-[22px] bg-[#3b9ad9] text-[14px] leading-[22px] text-center text-white whitespace-nowrap">MERCHANT</div>
      </div>
      <span className="ml-[36px] text-[51px] leading-none text-[#f4f6f8]">Lady Karen</span>
      <svg className="ml-auto" width="60" height="48" viewBox="0 0 60 48" fill="none">
        <rect x="3" y="3" width="42" height="42" rx="4" stroke="#f6f8fa" strokeWidth="6" />
        <path d="M48 24 L59 10 V38 Z" fill="#f6f8fa" stroke="#f6f8fa" strokeWidth="1" strokeLinejoin="round" />
      </svg>
      <svg className="ml-[87px]" width="54" height="54" viewBox="0 0 54 54" fill="none" stroke="#f6f8fa" strokeWidth="5.5" strokeLinejoin="round">
        <path d="M3 3 H17 L20 16 L11 24 C16 34 22 40 32 44 L38 36 L51 39 V51 C25 51 3 30 3 3 Z" />
      </svg>
      <div className="ml-[93px] mr-[60px] flex flex-col gap-[6px]">
        <span className="w-[12px] h-[12px] rounded-full bg-[#f6f8fa]" />
        <span className="w-[12px] h-[12px] rounded-full bg-[#f6f8fa]" />
        <span className="w-[12px] h-[12px] rounded-full bg-[#f6f8fa]" />
      </div>
    </div>
  );
}

export default function App() {
  return (
    <div className="w-[1080px] h-[2400px] flex flex-col bg-[#0b1014] overflow-hidden" style={{ fontFamily: "Roboto, sans-serif" }}>
      <StatusBar />
      <Header />
      <div className="relative flex-1 min-h-0">
        <Wallpaper />
        <Messages />
        <InputBar />
      </div>
      <NavBar />
    </div>
  );
}
